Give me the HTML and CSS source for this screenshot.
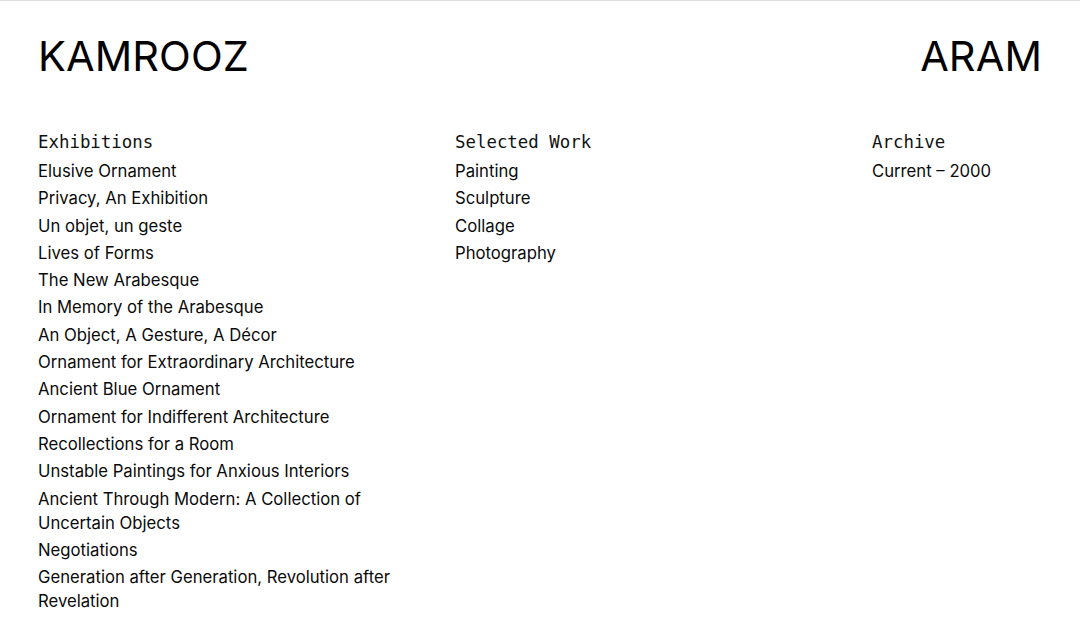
FILE: index.html
```html
<!DOCTYPE html>
<html lang="en">
<head>
<meta charset="utf-8">
<title>Kamrooz Aram</title>
<link rel="stylesheet" href="styles.css">
</head>
<body>
<header class="masthead">
  <a class="name" href="#">KAMROOZ</a>
  <a class="name" href="#">ARAM</a>
</header>
<main class="menu">
  <section class="col">
    <h2 class="col-title">Exhibitions</h2>
    <ul class="list">
      <li>Elusive Ornament</li>
      <li>Privacy, An Exhibition</li>
      <li>Un objet, un geste</li>
      <li>Lives of Forms</li>
      <li>The New Arabesque</li>
      <li>In Memory of the Arabesque</li>
      <li>An Object, A Gesture, A Décor</li>
      <li>Ornament for Extraordinary Architecture</li>
      <li>Ancient Blue Ornament</li>
      <li>Ornament for Indifferent Architecture</li>
      <li>Recollections for a Room</li>
      <li>Unstable Paintings for Anxious Interiors</li>
      <li>Ancient Through Modern: A Collection of Uncertain Objects</li>
      <li>Negotiations</li>
      <li>Generation after Generation, Revolution after Revelation</li>
    </ul>
  </section>
  <section class="col">
    <h2 class="col-title">Selected Work</h2>
    <ul class="list">
      <li>Painting</li>
      <li>Sculpture</li>
      <li>Collage</li>
      <li>Photography</li>
    </ul>
  </section>
  <section class="col">
    <h2 class="col-title">Archive</h2>
    <ul class="list">
      <li>Current – 2000</li>
    </ul>
  </section>
</main>
</body>
</html>
```
FILE: styles.css
```css
html, body {
  margin: 0;
  padding: 0;
  background: #fff;
}
body {
  border-top: 1px solid #dddddd;
  color: #000;
  font-family: Inter, "Liberation Sans", sans-serif;
}
.masthead {
  display: flex;
  justify-content: space-between;
  padding: 30px 38px 0 38px;
}
.name {
  color: #000;
  text-decoration: none;
  font-size: 41.5px;
  line-height: 50px;
  font-weight: 400;
  letter-spacing: 0.1px;
}
.menu {
  display: grid;
  grid-template-columns: 387px 387px 1fr;
  column-gap: 30px;
  padding: 49px 38px 0 38px;
}
.col-title {
  margin: 0 0 5px 0;
  font-family: "DejaVu Sans Mono", "Liberation Mono", monospace;
  font-weight: 400;
  font-size: 17.4px;
  line-height: 24px;
  color: #111;
}
.list {
  list-style: none;
  margin: 0;
  padding: 0;
  display: flex;
  flex-direction: column;
  gap: 3.3px;
}
.list li {
  font-size: 16.7px;
  line-height: 24px;
  color: #0a0a0a;
}
```
